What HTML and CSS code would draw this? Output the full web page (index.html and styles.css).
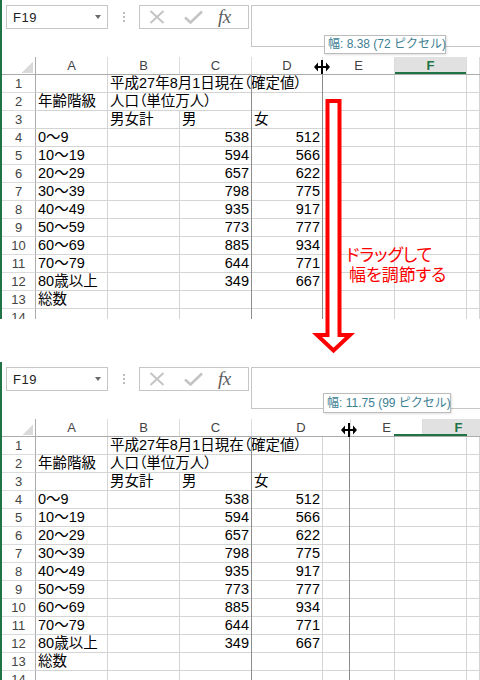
FILE: index.html
```html
<!DOCTYPE html>
<html lang="ja">
<head>
<meta charset="utf-8">
<title>列幅の調節</title>
<link rel="stylesheet" href="styles.css">
</head>
<body>
<div class="page">

  <section class="shot shot-top">
    <div class="fbar">
      <div class="namebox"><span class="name">F19</span><span class="caret"></span></div>
      <div class="grip"><i></i><i></i><i></i></div>
      <div class="btns">
        <svg class="ic-x" width="16" height="14" viewBox="0 0 16 14"><path d="M1.5 1 L14.5 13 M14.5 1 L1.5 13" stroke="#c4c4c4" stroke-width="2" fill="none"/></svg>
        <svg class="ic-ok" width="19" height="14" viewBox="0 0 19 14"><path d="M1 7.5 L6.5 12.5 L18 1.5" stroke="#c4c4c4" stroke-width="2.6" fill="none"/></svg>
        <span class="fx">fx</span>
      </div>
      <div class="finput"></div>
    </div>
    <div class="hdr">
      <div class="corner"></div><div>A</div><div>B</div><div>C</div><div>D</div><div>E</div><div class="sel">F</div><div></div>
    </div>
    <div class="row"><div class="rh">1</div><div></div><div class="s3">平成27年8月1日現在（確定値）</div><div></div><div></div><div></div></div>
    <div class="row"><div class="rh">2</div><div>年齢階級</div><div class="s2">人口（単位万人）</div><div></div><div></div><div></div><div></div></div>
    <div class="row"><div class="rh">3</div><div></div><div>男女計</div><div>男</div><div>女</div><div></div><div></div><div></div></div>
    <div class="row"><div class="rh">4</div><div>0〜9</div><div></div><div class="n">538</div><div class="n">512</div><div></div><div></div><div></div></div>
    <div class="row"><div class="rh">5</div><div>10〜19</div><div></div><div class="n">594</div><div class="n">566</div><div></div><div></div><div></div></div>
    <div class="row"><div class="rh">6</div><div>20〜29</div><div></div><div class="n">657</div><div class="n">622</div><div></div><div></div><div></div></div>
    <div class="row"><div class="rh">7</div><div>30〜39</div><div></div><div class="n">798</div><div class="n">775</div><div></div><div></div><div></div></div>
    <div class="row"><div class="rh">8</div><div>40〜49</div><div></div><div class="n">935</div><div class="n">917</div><div></div><div></div><div></div></div>
    <div class="row"><div class="rh">9</div><div>50〜59</div><div></div><div class="n">773</div><div class="n">777</div><div></div><div></div><div></div></div>
    <div class="row"><div class="rh">10</div><div>60〜69</div><div></div><div class="n">885</div><div class="n">934</div><div></div><div></div><div></div></div>
    <div class="row"><div class="rh">11</div><div>70〜79</div><div></div><div class="n">644</div><div class="n">771</div><div></div><div></div><div></div></div>
    <div class="row"><div class="rh">12</div><div>80歳以上</div><div></div><div class="n">349</div><div class="n">667</div><div></div><div></div><div></div></div>
    <div class="row"><div class="rh">13</div><div>総数</div><div></div><div></div><div></div><div></div><div></div><div></div></div>
    <div class="row"><div class="rh">14</div><div></div><div></div><div></div><div></div><div></div><div></div><div></div></div>

    <div class="guide guide-cd"></div>
    <div class="guide guide-top"></div>
    <div class="tip tip-top">幅: 8.38 (72 ピクセル)</div>
    <svg class="cursor cursor-top" width="16" height="14" viewBox="0 0 16 14"><rect x="7" y="0" width="2" height="14" fill="#000"/><rect x="2" y="6" width="12" height="2" fill="#000"/><path d="M0 7 L4 2.5 L4 11.5 Z M16 7 L12 2.5 L12 11.5 Z" fill="#000"/></svg>
  </section>

  <div class="gap"></div>

  <section class="shot shot-bottom">
    <div class="fbar">
      <div class="namebox"><span class="name">F19</span><span class="caret"></span></div>
      <div class="grip"><i></i><i></i><i></i></div>
      <div class="btns">
        <svg class="ic-x" width="16" height="14" viewBox="0 0 16 14"><path d="M1.5 1 L14.5 13 M14.5 1 L1.5 13" stroke="#c4c4c4" stroke-width="2" fill="none"/></svg>
        <svg class="ic-ok" width="19" height="14" viewBox="0 0 19 14"><path d="M1 7.5 L6.5 12.5 L18 1.5" stroke="#c4c4c4" stroke-width="2.6" fill="none"/></svg>
        <span class="fx">fx</span>
      </div>
      <div class="finput"></div>
    </div>
    <div class="hdr hdr-wide">
      <div class="corner"></div><div>A</div><div>B</div><div>C</div><div>D</div><div>E</div><div class="sel-bg">F</div>
    </div>
    <div class="row"><div class="rh">1</div><div></div><div class="s3">平成27年8月1日現在（確定値）</div><div></div><div></div><div></div></div>
    <div class="row"><div class="rh">2</div><div>年齢階級</div><div class="s2">人口（単位万人）</div><div></div><div></div><div></div><div></div></div>
    <div class="row"><div class="rh">3</div><div></div><div>男女計</div><div>男</div><div>女</div><div></div><div></div><div></div></div>
    <div class="row"><div class="rh">4</div><div>0〜9</div><div></div><div class="n">538</div><div class="n">512</div><div></div><div></div><div></div></div>
    <div class="row"><div class="rh">5</div><div>10〜19</div><div></div><div class="n">594</div><div class="n">566</div><div></div><div></div><div></div></div>
    <div class="row"><div class="rh">6</div><div>20〜29</div><div></div><div class="n">657</div><div class="n">622</div><div></div><div></div><div></div></div>
    <div class="row"><div class="rh">7</div><div>30〜39</div><div></div><div class="n">798</div><div class="n">775</div><div></div><div></div><div></div></div>
    <div class="row"><div class="rh">8</div><div>40〜49</div><div></div><div class="n">935</div><div class="n">917</div><div></div><div></div><div></div></div>
    <div class="row"><div class="rh">9</div><div>50〜59</div><div></div><div class="n">773</div><div class="n">777</div><div></div><div></div><div></div></div>
    <div class="row"><div class="rh">10</div><div>60〜69</div><div></div><div class="n">885</div><div class="n">934</div><div></div><div></div><div></div></div>
    <div class="row"><div class="rh">11</div><div>70〜79</div><div></div><div class="n">644</div><div class="n">771</div><div></div><div></div><div></div></div>
    <div class="row"><div class="rh">12</div><div>80歳以上</div><div></div><div class="n">349</div><div class="n">667</div><div></div><div></div><div></div></div>
    <div class="row"><div class="rh">13</div><div>総数</div><div></div><div></div><div></div><div></div><div></div><div></div></div>
    <div class="row"><div class="rh">14</div><div></div><div></div><div></div><div></div><div></div><div></div><div></div></div>

    <div class="sel-line"></div>
    <div class="guide guide-cd"></div>
    <div class="guide guide-bottom"></div>
    <div class="tip tip-bottom">幅: 11.75 (99 ピクセル)</div>
    <svg class="cursor cursor-bottom" width="16" height="14" viewBox="0 0 16 14"><rect x="7" y="0" width="2" height="14" fill="#000"/><rect x="2" y="6" width="12" height="2" fill="#000"/><path d="M0 7 L4 2.5 L4 11.5 Z M16 7 L12 2.5 L12 11.5 Z" fill="#000"/></svg>
  </section>

  <svg class="arrow" width="480" height="680" viewBox="0 0 480 680">
    <polygon points="327.5,101 339.5,101 339.5,335 350,335 333.5,350.5 317,335 327.5,335" fill="#fff" stroke="#ff0000" stroke-width="4" stroke-linejoin="miter"/>
  </svg>
  <div class="note">
    <div>ドラッグして</div>
    <div class="note-l2">幅を調節する</div>
  </div>
</div>
</body>
</html>
```

FILE: styles.css
```css
* {
  box-sizing: border-box;
  margin: 0;
  padding: 0;
}

html, body {
  width: 480px;
  height: 680px;
  overflow: hidden;
  background: #fff;
}

body {
  font-family: "Liberation Sans", "Noto Sans CJK JP", sans-serif;
  color: #000;
}

.page {
  position: relative;
  width: 480px;
  height: 680px;
}

.shot {
  position: relative;
  overflow: hidden;
  border-left: 2px solid #217346;
}

.shot-top {
  height: 319px;
}

.gap {
  height: 43px;
}

.shot-bottom {
  height: 318px;
}

/* formula bar */
.fbar {
  display: flex;
  align-items: flex-start;
  height: 57px;
  padding: 5px 0 0 4px;
}

.namebox {
  width: 102px;
  height: 24px;
  border: 1px solid #c6c6c6;
  display: flex;
  align-items: center;
  justify-content: space-between;
  padding: 0 6px 0 6px;
}

.name {
  font-size: 13px;
  color: #222;
  letter-spacing: 0.5px;
}

.caret {
  width: 0;
  height: 0;
  border-left: 3.5px solid transparent;
  border-right: 3.5px solid transparent;
  border-top: 4px solid #6a6a6a;
}

.grip {
  width: 31px;
  height: 24px;
  display: flex;
  flex-direction: column;
  align-items: center;
  justify-content: center;
  gap: 2px;
}

.grip i {
  display: block;
  width: 2px;
  height: 2px;
  background: #bdbdbd;
}

.btns {
  width: 110px;
  height: 24px;
  border: 1px solid #c6c6c6;
  display: flex;
  align-items: center;
}

.ic-x {
  margin-left: 9px;
}

.ic-ok {
  margin-left: 19px;
}

.fx {
  margin-left: 15px;
  font-family: "Liberation Serif", serif;
  font-style: italic;
  font-size: 19px;
  line-height: 22px;
  color: #5e5e5e;
  letter-spacing: -0.5px;
}

.finput {
  flex: 1;
  height: 42px;
  margin-left: 2px;
  margin-right: -2px;
  border: 1px solid #c6c6c6;
}

/* sheet */
.hdr,
.row {
  display: grid;
  grid-template-columns: 34px 72px 72px 72px 71px 72px 72px 1fr;
}

.hdr {
  height: 18px;
  border-bottom: 1px solid #ababab;
}

.hdr-wide {
  grid-template-columns: 34px 72px 72px 72px 99px 72px 72px;
}

.hdr > div {
  border-right: 1px solid #dcdcdc;
  font-size: 13px;
  line-height: 17px;
  text-align: center;
  color: #444;
}

.hdr > .corner {
  border-right: 1px solid #ababab;
  background: linear-gradient(to bottom right, transparent 50%, #dadada 50%) no-repeat right 2px bottom 1px / 11px 11px;
}

.hdr > .sel {
  background: #e1e1e1;
  color: #217346;
  font-weight: bold;
  box-shadow: inset 0 -2px 0 #217346;
}

.hdr > .sel-bg {
  background: #e1e1e1;
  color: #217346;
  font-weight: bold;
}

.row {
  height: 18px;
}

.row > div {
  border-right: 1px solid #d4d4d4;
  border-bottom: 1px solid #d4d4d4;
  font-size: 14.5px;
  line-height: 17px;
  white-space: nowrap;
  padding: 0 2px;
  font-feature-settings: "palt";
}

.row > .rh {
  border-right-color: #ababab;
  border-bottom-color: #dcdcdc;
  text-align: center;
  font-size: 13px;
  color: #444;
  padding: 0;
}

.row > .n {
  text-align: right;
}

.s2 {
  grid-column: span 2;
}

.s3 {
  grid-column: span 3;
}

/* overlays */
.guide {
  position: absolute;
  top: 75px;
  bottom: 0;
  width: 1px;
  background: #8c8c8c;
}

.guide-cd {
  left: 249px;
}

.guide-top {
  left: 320px;
}

.guide-bottom {
  left: 347px;
}

.sel-line {
  position: absolute;
  left: 392px;
  top: 72px;
  width: 73px;
  height: 2px;
  background: #217346;
}

.tip {
  position: absolute;
  height: 19px;
  padding: 0 3px;
  background: #fff;
  border: 1px solid #bcbcbc;
  box-shadow: 1px 1px 2px rgba(0, 0, 0, 0.12);
  font-size: 12px;
  line-height: 17px;
  color: #3d7f93;
  white-space: nowrap;
}

.tip-top {
  left: 322px;
  top: 35px;
  width: 122px;
}

.tip-bottom {
  left: 321px;
  top: 31px;
  width: 128px;
  height: 20px;
  line-height: 18px;
}

.cursor {
  position: absolute;
}

.cursor-top {
  left: 312px;
  top: 60px;
}

.cursor-bottom {
  left: 339px;
  top: 61px;
}

.arrow {
  position: absolute;
  left: 0;
  top: 0;
  pointer-events: none;
}

.note {
  position: absolute;
  left: 346px;
  top: 244px;
  font-family: "Noto Sans CJK JP", sans-serif;
  font-size: 17px;
  line-height: 19.5px;
  color: #ff0000;
  font-feature-settings: "palt";
  white-space: nowrap;
}

.note-l2 {
  padding-left: 3px;
}
```
